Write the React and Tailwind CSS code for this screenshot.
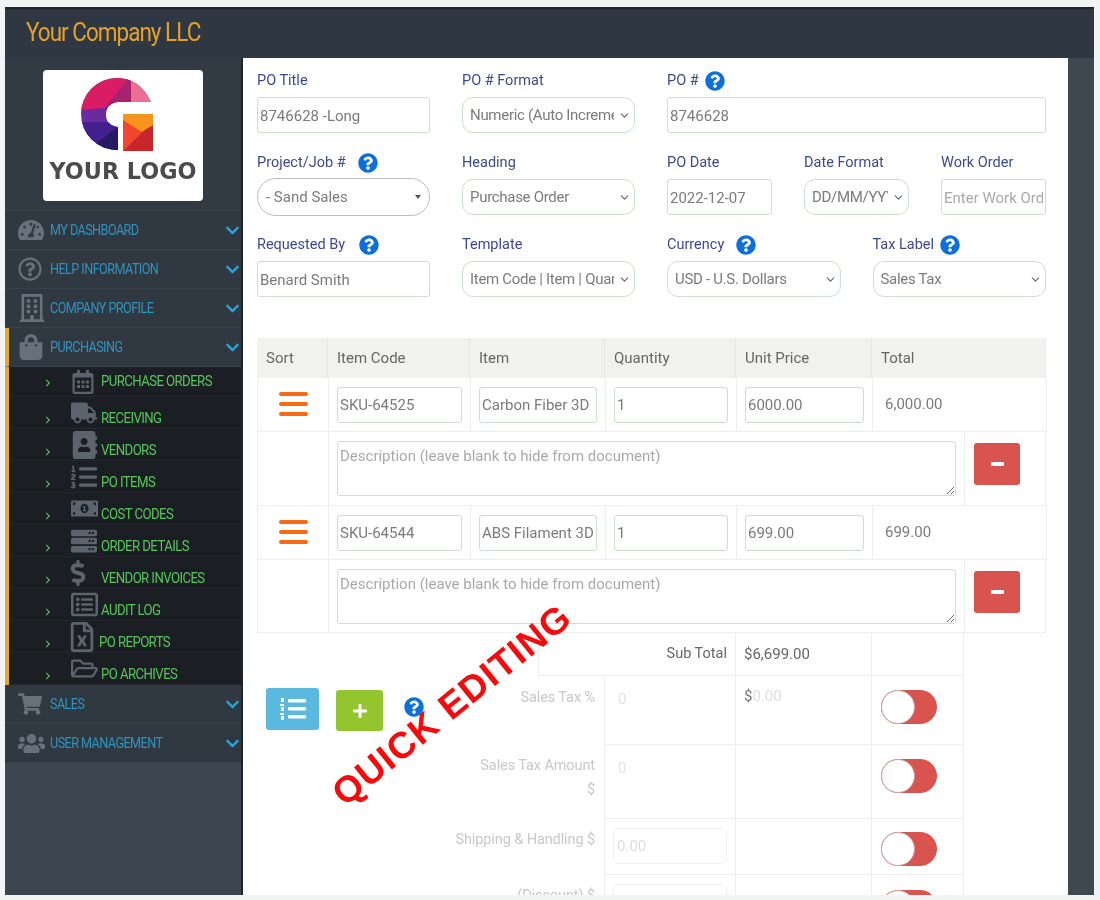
import React from "react";
import {
  FaTachometerAlt, FaRegQuestionCircle, FaRegBuilding, FaShoppingBag, FaChevronDown, FaQuestionCircle,
  FaRegCalendarAlt, FaTruck, FaAddressBook, FaListOl, FaMoneyBillAlt, FaServer, FaDollarSign, FaRegListAlt,
  FaRegFileExcel, FaRegFolderOpen, FaShoppingCart, FaUsers, FaChevronRight, FaPlus,
} from "react-icons/fa";
import { LuChevronDown } from "react-icons/lu";

const FONT = "font-['Roboto',_sans-serif]";

function Logo() {
  return (
    <div className="w-[160px] h-[131px] ml-[38px] bg-white rounded-[4px] flex flex-col pt-[8px]">
      <svg width="72" height="73" viewBox="81 78 72 73" className="ml-[38px]">
        <defs>
          <clipPath id="g">
            <path d="M151 102H118Q106 104 106 115Q106 125 118 127V150A36 36 0 0 1 81 114A36 36 0 0 1 117 78Q140 78 151 102Z" />
          </clipPath>
        </defs>
        <g clipPath="url(#g)">
          <rect x="78" y="76" width="80" height="80" fill="#6b2b9e" />
          <polygon points="78,76 131,76 105,108 78,110" fill="#d91c63" />
          <polygon points="131,76 155,76 155,104 131,104" fill="#ee6f96" />
          <polygon points="131,76 131,102 115,102 105,108" fill="#a6246f" />
          <polygon points="80,122 108,122 118,127 118,152 95,152" fill="#43208e" />
          <polygon points="92,146 118,127 118,152 100,152" fill="#241a66" />
        </g>
        <rect x="123" y="114" width="30" height="37" fill="#f7941d" />
        <polygon points="123,120 142,132 123,151" fill="#f1462f" />
        <polygon points="142,132 153,125 153,151 123,151" fill="#c9252c" />
      </svg>
      <div className="font-['DejaVu_Sans',_sans-serif] font-bold text-[22.3px] leading-[28px] mt-[6px] text-center text-[#4b4b4b] whitespace-nowrap">YOUR LOGO</div>
    </div>
  );
}

function NavRow({ Icon, label, size = 26, accent }) {
  return (
    <div className={`h-[39px] flex items-center border-b border-[#3a434d] pr-[1px] ${accent ? "border-l-[4px] border-l-[#e5a835] pl-[9px]" : "pl-[13px]"}`}>
      <span className="w-[32px] flex justify-start text-[#67717c] shrink-0"><Icon size={size} /></span>
      <span className="inline-block origin-left scale-x-[0.9] text-[#2f93bd] text-[14px] tracking-[-0.6px] whitespace-nowrap">{label}</span>
      <FaChevronDown size={15} className="ml-auto text-[#27a3d9]" />
    </div>
  );
}

const subItems = [
  { Icon: FaRegCalendarAlt, label: "PURCHASE ORDERS", h: "h-[30px]", flat: true, size: 24 },
  { Icon: FaTruck, label: "RECEIVING", size: 26 },
  { Icon: FaAddressBook, label: "VENDORS", size: 28 },
  { Icon: FaListOl, label: "PO ITEMS", size: 26 },
  { Icon: FaMoneyBillAlt, label: "COST CODES", size: 27 },
  { Icon: FaServer, label: "ORDER DETAILS", size: 26 },
  { Icon: FaDollarSign, label: "VENDOR INVOICES", size: 26, nudge: "-ml-[6px]" },
  { Icon: FaRegListAlt, label: "AUDIT LOG", size: 27 },
  { Icon: FaRegFileExcel, label: "PO REPORTS", size: 30, shift: true, nudge: "-ml-[4px]" },
  { Icon: FaRegFolderOpen, label: "PO ARCHIVES", size: 27 },
];

function SubRow({ Icon, label, h = "h-[32px]", flat, size, shift, nudge = "" }) {
  return (
    <div className={`${h} flex items-center border-b border-[#24282d] pl-[35px]`}>
      <span className={`w-[27px] shrink-0 ${flat ? "pt-[3px]" : "pt-[14px]"}`}>
        <FaChevronRight size={8} className="text-[#58b85c]" />
      </span>
      <span className="w-[30px] shrink-0 text-[#5b636c]"><Icon size={size} className={nudge} /></span>
      <span className={`inline-block origin-left scale-x-[0.94] text-[#58c45c] text-[14px] tracking-[-0.6px] whitespace-nowrap ${flat ? "" : "pt-[12px]"} ${shift ? "-ml-[2px]" : ""}`}>{label}</span>
    </div>
  );
}

function Sidebar() {
  return (
    <aside className="w-[238px] shrink-0 bg-[#3b4651] border-r-[2px] border-[#1d2430] flex flex-col">
      <div className="bg-[#323a44] h-[153px] pt-[12px] border-b border-[#3a434d]"><Logo /></div>
      <div className="bg-[#303841]">
        <NavRow Icon={FaTachometerAlt} label="MY DASHBOARD" />
        <NavRow Icon={FaRegQuestionCircle} label="HELP INFORMATION" size={24} />
        <NavRow Icon={FaRegBuilding} label="COMPANY PROFILE" size={28} />
        <NavRow Icon={FaShoppingBag} label="PURCHASING" accent />
        <div className="bg-[#1b1e22] border-l-[4px] border-[#e5a835] ">
          {subItems.map((s) => <SubRow key={s.label} {...s} />)}
        </div>
        <NavRow Icon={FaShoppingCart} label="SALES" size={24} />
        <NavRow Icon={FaUsers} label="USER MANAGEMENT" size={27} />
      </div>
    </aside>
  );
}

const inputBase = "h-[36px] w-full border-[1.5px] border-[#c9e2c8] bg-white text-[#7b7b7b] text-[15px] flex items-center overflow-hidden whitespace-nowrap";

function Field({ label, help, gap = "ml-[12px]", children }) {
  return (
    <div className="min-w-0 flex-1">
      <div className="h-[18px] mb-[8px] pt-[1px] flex items-center text-[#3d4a8a] text-[14.5px] whitespace-nowrap">
        {label}
        {help && <FaQuestionCircle size={20} className={`${gap} text-[#0f6fd8]`} />}
      </div>
      {children}
    </div>
  );
}

function TextBox({ value, placeholder, className = "" }) {
  return (
    <input
      readOnly
      value={value ?? ""}
      placeholder={placeholder}
      className={`${inputBase} rounded-[3px] px-[2px] pt-[1px] outline-none placeholder:text-[#a9a9a9] ${className}`}
    />
  );
}

function SelectBox({ value }) {
  return (
    <div className={`${inputBase} rounded-[11px] pl-[7px] pr-[3px] pt-[1px] tracking-[-0.3px]`}>
      <span className="flex-1 overflow-hidden">{value}</span>
      <LuChevronDown size={13} className="shrink-0 text-[#666] ml-[4px]" />
    </div>
  );
}

function Form() {
  return (
    <div className="grid grid-cols-[173px_173px_1fr] gap-x-[32px] gap-y-[20px]">
      <Field label="PO Title"><TextBox value="8746628 -Long" /></Field>
      <Field label="PO # Format"><SelectBox value="Numeric (Auto Increment)" /></Field>
      <Field label="PO #" help gap="ml-[6px]"><TextBox value="8746628" /></Field>

      <Field label="Project/Job #" help>
        <div className="h-[38px] -my-[1px] w-full border-[1.5px] border-[#bdbdbd] rounded-[19px] flex items-center pl-[8px] pr-[8px] text-[15px] text-[#7b7b7b]">
          <span className="flex-1">- Sand Sales</span>
          <span className="w-0 h-0 border-x-[3.5px] border-x-transparent border-t-[4px] border-t-[#555]" />
        </div>
      </Field>
      <Field label="Heading"><SelectBox value="Purchase Order" /></Field>
      <div className="flex gap-[32px]">
        <Field label="PO Date"><TextBox value="2022-12-07" /></Field>
        <Field label="Date Format"><SelectBox value="DD/MM/YYYY" /></Field>
        <Field label="Work Order"><TextBox placeholder="Enter Work Order" /></Field>
      </div>

      <Field label="Requested By" help gap="ml-[14px]"><TextBox value="Benard Smith" /></Field>
      <Field label="Template"><SelectBox value="Item Code | Item | Quantity" /></Field>
      <div className="flex gap-[32px]">
        <Field label="Currency" help><SelectBox value="USD - U.S. Dollars" /></Field>
        <Field label="Tax Label" help gap="ml-[6px]"><SelectBox value="Sales Tax" /></Field>
      </div>
    </div>
  );
}

const rowGrid = "grid grid-cols-[71px_142px_135px_131px_136px_174px]";
const cell = "border-r border-b border-[#eeeeee] flex items-center";

function Burger() {
  return (
    <div className="w-[29px] flex flex-col gap-[6px] mx-auto -mt-[2px]">
      <span className="h-[4px] rounded-full bg-[#f96a15]" />
      <span className="h-[4px] rounded-full bg-[#f96a15]" />
      <span className="h-[4px] rounded-full bg-[#f96a15]" />
    </div>
  );
}

function ItemRows({ code, item, qty, price, total, descH }) {
  return (
    <>
      <div className={`${rowGrid} h-[54px] border-l border-[#eeeeee]`}>
        <div className={cell}><Burger /></div>
        <div className={`${cell} pl-[8px] pr-[8px]`}><TextBox value={code} /></div>
        <div className={`${cell} pl-[8px] pr-[8px]`}><TextBox value={item} /></div>
        <div className={`${cell} pl-[8px] pr-[8px]`}><TextBox value={qty} /></div>
        <div className={`${cell} pl-[8px] pr-[8px]`}><TextBox value={price} /></div>
        <div className={`${cell} pl-[12px] text-[15px] text-[#7b7b7b]`}>{total}</div>
      </div>
      <div className={`grid grid-cols-[71px_636px_1fr] ${descH} border-l border-[#eeeeee]`}>
        <div className={cell} />
        <div className={`${cell} pl-[8px] pr-[8px]`}>
          <textarea
            readOnly
            placeholder="Description (leave blank to hide from document)"
            className="w-full h-[55px] border-[1.5px] border-[#c9e2c8] rounded-[3px] px-[2px] pt-[3px] text-[15px] leading-[22px] outline-none resize-y placeholder:text-[#a9a9a9]"
          />
        </div>
        <div className="border-r border-b border-[#eeeeee] pl-[9px] pt-[11px]">
          <div className="w-[46px] h-[42px] rounded-[3px] bg-[#d9534f] flex items-center justify-center">
            <span className="w-[13px] h-[4px] bg-white rounded-[1px]" />
          </div>
        </div>
      </div>
    </>
  );
}

function Toggle() {
  return (
    <div className="relative w-[56px] h-[34px] rounded-full bg-[#d9534f] ml-[9px]">
      <div className="absolute left-0 top-0 w-[34px] h-[34px] rounded-full bg-white border border-[#d9a0a0]" />
    </div>
  );
}

function ListIcon() {
  return (
    <svg width="26" height="22" viewBox="0 0 26 22" fill="white">
      <rect x="8" y="1" width="18" height="3.5" rx="1" />
      <rect x="8" y="9" width="18" height="3.5" rx="1" />
      <rect x="8" y="17" width="18" height="3.5" rx="1" />
      <rect x="1" y="0" width="3" height="4" />
      <rect x="0" y="6" width="4" height="2" />
      <rect x="1" y="9" width="3" height="4" />
      <rect x="0" y="15" width="4" height="2" />
      <rect x="1" y="18" width="3" height="4" />
    </svg>
  );
}

const bottomGrid = "grid grid-cols-[348px_131px_136px_92px]";

function FadedLabel({ children }) {
  return <div className="text-right text-[#c8c8c8] text-[14.5px] tracking-[-0.1px] leading-[24px]">{children}</div>;
}

function Table() {
  return (
    <div className="mt-[41px]">
      <div className={`${rowGrid} h-[40px] bg-[#f1f1ef] text-[15px] text-[#666]`}>
        {["Sort", "Item Code", "Item", "Quantity", "Unit Price", "Total"].map((h) => (
          <div key={h} className="border-r border-[#e6e6e4] pl-[9px] flex items-center">{h}</div>
        ))}
      </div>
      <ItemRows code="SKU-64525" item="Carbon Fiber 3D Filament" qty="1" price="6000.00" total="6,000.00" descH="h-[74px]" />
      <ItemRows code="SKU-64544" item="ABS Filament 3D" qty="1" price="699.00" total="699.00" descH="h-[73px]" />

      <div className="grid grid-cols-[281px_198px_136px_92px] h-[43px]">
        <div />
        <div className="border-l border-r border-b border-[#eeeeee] pr-[8px] flex items-center justify-end text-[14.5px] text-[#666]">Sub Total</div>
        <div className="border-r border-b border-[#eeeeee] pl-[8px] flex items-center text-[15px] text-[#666]">$6,699.00</div>
        <div className="border-r border-b border-[#eeeeee]" />
      </div>

      <div className={`${bottomGrid} h-[69px]`}>
        <div className="border-r border-[#eeeeee] flex items-start pl-[9px] pr-[9px] pt-[12px]">
          <div className="w-[53px] h-[42px] bg-[#5bb8de] rounded-[3px] flex items-center justify-center"><ListIcon /></div>
          <div className="w-[47px] h-[41px] mt-[2px] ml-[17px] bg-[#93c52f] rounded-[3px] flex items-center justify-center text-white"><FaPlus size={16} /></div>
          <FaQuestionCircle size={20} className="ml-[21px] mt-[9px] text-[#0f6fd8]" />
          <div className="ml-auto -mt-[2px]"><FadedLabel>Sales Tax %</FadedLabel></div>
        </div>
        <div className="border-r border-b border-[#eeeeee] pl-[13px] pt-[12px] text-[15px] text-[#e4e4e4]">0</div>
        <div className="border-r border-b border-[#eeeeee] pl-[8px] pt-[9px] text-[15px] text-[#dddddd]"><span className="text-[#777]">$</span>0.00</div>
        <div className="border-r border-b border-[#eeeeee] pt-[14px]"><Toggle /></div>
      </div>

      <div className={`${bottomGrid} h-[74px]`}>
        <div className="border-r border-[#eeeeee] pr-[9px] pt-[9px]"><FadedLabel>Sales Tax Amount<br />$</FadedLabel></div>
        <div className="border-r border-b border-[#eeeeee] pl-[13px] pt-[12px] text-[15px] text-[#e4e4e4]">0</div>
        <div className="border-r border-b border-[#eeeeee]" />
        <div className="border-r border-b border-[#eeeeee] pt-[14px]"><Toggle /></div>
      </div>

      <div className={`${bottomGrid} h-[56px]`}>
        <div className="border-r border-[#eeeeee] pr-[9px] pt-[9px]"><FadedLabel>Shipping &amp; Handling $</FadedLabel></div>
        <div className="border-r border-b border-[#eeeeee] pl-[8px] pr-[8px] pt-[9px]">
          <div className="h-[36px] border border-[#f0f0f0] rounded-[6px] pl-[3px] flex items-center text-[15px] text-[#dddddd]">0.00</div>
        </div>
        <div className="border-r border-b border-[#eeeeee]" />
        <div className="border-r border-b border-[#eeeeee] pt-[13px]"><Toggle /></div>
      </div>

      <div className={`${bottomGrid} h-[56px]`}>
        <div className="border-r border-[#eeeeee] pr-[9px] pt-[9px]"><FadedLabel>(Discount) $</FadedLabel></div>
        <div className="border-r border-[#eeeeee] pl-[8px] pr-[8px] pt-[9px]">
          <div className="h-[36px] border border-[#f0f0f0] rounded-[6px]" />
        </div>
        <div className="border-r border-[#eeeeee]" />
        <div className="border-r border-[#eeeeee] pt-[15px]"><Toggle /></div>
      </div>
    </div>
  );
}

export default function App() {
  return (
    <div className={`${FONT} w-[1100px] h-[900px] overflow-hidden bg-[#f3f4f4] pl-[5px] pr-[6px] pt-[7px] pb-[5px] blur-[0.5px]`}>
      <div className="h-full flex flex-col bg-[#3b4651]">
        <header className="h-[51px] shrink-0 bg-[#2f3742] border-t-[2px] border-[#20262e] pl-[21px] pb-[2px] flex items-center">
          <span className="inline-block origin-left scale-x-[0.9] text-[#e3a02c] text-[25px] tracking-[-1.1px] whitespace-nowrap">Your Company LLC</span>
        </header>
        <div className="flex-1 flex min-h-0">
          <Sidebar />
          <main className="relative flex-1 min-w-0 bg-white pl-[14px] pr-[22px] pt-[13px] overflow-hidden">
            <Form />
            <Table />
            <div className="absolute left-[209px] top-[647px] -translate-x-1/2 -translate-y-1/2 -rotate-[39deg] font-['Liberation_Sans',_sans-serif] font-bold text-[37px] tracking-[1.2px] text-[#f40c0c] whitespace-nowrap">
              QUICK EDITING
            </div>
          </main>
          <div className="w-[26px] shrink-0 bg-[#3e4851]" />
        </div>
      </div>
    </div>
  );
}
